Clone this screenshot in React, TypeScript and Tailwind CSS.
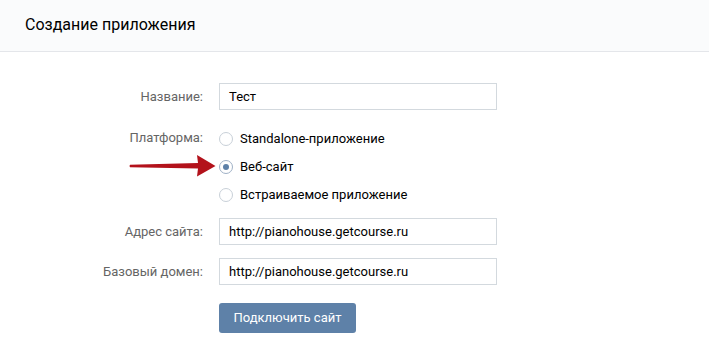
import React from "react";

function Radio({ checked, label, h }: { checked?: boolean; label: string; h: string }) {
  return (
    <div className={"flex items-center " + h}>
      <span
        className={
          "flex h-[14px] w-[14px] items-center justify-center rounded-full border bg-white " +
          (checked ? "border-[#9fb1c6]" : "border-[#c8d0d8]")
        }
      >
        {checked && <span className="h-[6px] w-[6px] rounded-full bg-[#5e81a8]" />}
      </span>
      <span className="ml-[7px] text-[13px] text-[#000]">{label}</span>
    </div>
  );
}

function Field({ value }: { value: string }) {
  return (
    <div className="flex h-[27px] w-[278px] items-center border border-[#d3d9de] bg-white px-[9px] text-[13px] text-[#000]">
      {value}
    </div>
  );
}

export default function App() {
  return (
    <div
      className="relative h-[354px] w-[709px] overflow-hidden bg-white"
      style={{ fontFamily: "Roboto, 'Open Sans', Arial, sans-serif" }}
    >
      <div className="flex h-[52px] items-center border-b border-[#e4e6ea] bg-[#fafbfc] pb-[1px] pl-[25px] text-[16px] text-[#000]">
        Создание приложения
      </div>

      <div className="grid grid-cols-[203px_278px] gap-x-[16px] pt-[31px] text-[13px]">
        <div className="flex h-[27px] items-center justify-end text-[#656565]">Название:</div>
        <Field value="Тест" />

        <div className="mt-[14px] flex h-[28px] items-center justify-end text-[#656565]">Платформа:</div>
        <div className="mt-[14px] flex flex-col">
          <Radio h="h-[29px]" label="Standalone-приложение" />
          <Radio h="h-[28px]" checked label="Веб-сайт" />
          <Radio h="h-[28px]" label="Встраиваемое приложение" />
        </div>

        <div className="mt-[9px] flex h-[27px] items-center justify-end text-[#656565]">Адрес сайта:</div>
        <div className="mt-[9px]">
          <Field value="http://pianohouse.getcourse.ru" />
        </div>

        <div className="mt-[13px] flex h-[27px] items-center justify-end text-[#656565]">Базовый домен:</div>
        <div className="mt-[13px]">
          <Field value="http://pianohouse.getcourse.ru" />
        </div>

        <div />
        <div className="mt-[18px]">
          <button className="flex h-[30px] w-[137px] items-center justify-center rounded-[3px] bg-[#5e81a8] text-[13px] text-white">
            Подключить сайт
          </button>
        </div>
      </div>

      <svg
        className="absolute left-[128px] top-[154px]"
        width="90"
        height="24"
        viewBox="0 0 90 24"
      >
        <path
          d="M2 10.8 Q1 12 2 13.2 L70 14.5 L69 22.5 L87.5 12 L69 1 L70 9 Z"
          fill="#b3121b"
        />
      </svg>
    </div>
  );
}
